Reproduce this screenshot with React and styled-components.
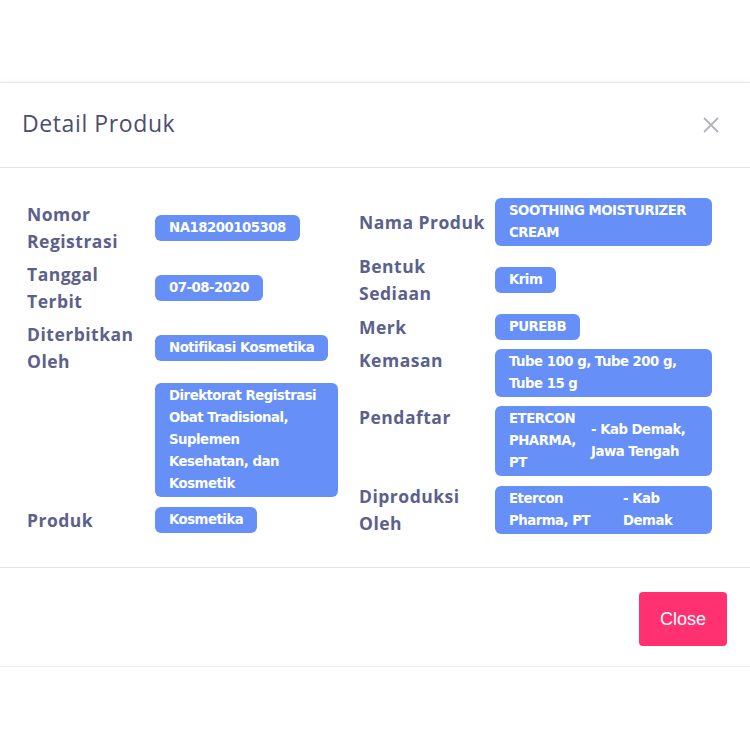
import React from "react";
import styled, { createGlobalStyle } from "styled-components";

const GlobalStyle = createGlobalStyle`
  body {
    margin: 0;
    background: #ffffff;
    font-family: "Open Sans", "Noto Sans", sans-serif;
  }
`;

const Page = styled.div`
  padding-top: 82px;
`;

const Modal = styled.div`
  background: #ffffff;
  border-top: 1px solid #e6e6ea;
  border-bottom: 1px solid #ececf0;
  box-shadow: 0 0 6px rgba(0, 0, 0, 0.05);
`;

const Header = styled.div`
  height: 84px;
  display: flex;
  align-items: center;
  justify-content: space-between;
  padding: 0 30px 0 22px;
  border-bottom: 1px solid #e6e6ea;
`;

const Title = styled.h2`
  margin: 0 0 4px;
  font-family: "Open Sans", sans-serif;
  font-size: 23px;
  font-weight: 500;
  color: #4b4e6c;
  letter-spacing: 0.6px;
`;

const CloseX = styled.button`
  border: 0;
  background: none;
  padding: 0;
  width: 18px;
  height: 18px;
  display: flex;
  cursor: pointer;
`;

const Body = styled.div`
  display: grid;
  grid-template-columns: 311px 353px;
  column-gap: 21px;
  padding: 28px 38px 30px 27px;
  border-bottom: 1px solid #e6e6ea;
`;

const Column = styled.div`
  display: flex;
  flex-direction: column;
  gap: ${(p) => p.$gap}px;
  padding-top: ${(p) => p.$pt || 0}px;
`;

const Row = styled.div`
  display: grid;
  grid-template-columns: ${(p) => p.$label}px 1fr;
  align-items: ${(p) => p.$align || "center"};
`;

const Label = styled.div`
  font-family: "Open Sans", sans-serif;
  font-size: 17.5px;
  font-weight: 700;
  line-height: 27px;
  letter-spacing: 0.5px;
  color: #5b618c;
`;

const Badge = styled.div`
  justify-self: ${(p) => (p.$full ? "stretch" : "start")};
  margin: 2px 0;
  padding: 2px 14px;
  background: #668ff8;
  border-radius: 6px;
  color: #ffffff;
  font-family: "DejaVu Sans", sans-serif;
  font-size: 13.3px;
  font-weight: 700;
  line-height: 22px;
  letter-spacing: -0.5px;
`;

const Split = styled.div`
  display: grid;
  grid-template-columns: ${(p) => p.$left}px 1fr;
  column-gap: ${(p) => p.$gap}px;
  align-items: center;
`;

const Footer = styled.div`
  display: flex;
  justify-content: flex-end;
  padding: 24px 23px 20px;
`;

const CloseButton = styled.button`
  width: 88px;
  height: 54px;
  border: 0;
  border-radius: 4px;
  background: #ff3170;
  color: #ffffff;
  font-family: "Liberation Sans", Arial, sans-serif;
  font-size: 18px;
  cursor: pointer;
`;

export default function App() {
  return (
    <Page>
      <GlobalStyle />
      <Modal>
        <Header>
          <Title>Detail Produk</Title>
          <CloseX aria-label="close">
            <svg width="18" height="18" viewBox="0 0 18 18">
              <path d="M2 2L16 16M16 2L2 16" stroke="#b4b4bd" strokeWidth="1.8" />
            </svg>
          </CloseX>
        </Header>
        <Body>
          <Column $gap={6} $pt={5}>
            <Row $label={128}>
              <Label>Nomor<br />Registrasi</Label>
              <Badge>NA18200105308</Badge>
            </Row>
            <Row $label={128}>
              <Label>Tanggal<br />Terbit</Label>
              <Badge>07-08-2020</Badge>
            </Row>
            <Row $label={128}>
              <Label>Diterbitkan<br />Oleh</Label>
              <Badge>Notifikasi Kosmetika</Badge>
            </Row>
            <Row $label={128}>
              <Label />
              <Badge $full>
                Direktorat Registrasi Obat Tradisional,<br />Suplemen<br />Kesehatan, dan Kosmetik
              </Badge>
            </Row>
            <Row $label={128}>
              <Label>Produk</Label>
              <Badge>Kosmetika</Badge>
            </Row>
          </Column>
          <Column $gap={5}>
            <Row $label={136}>
              <Label>Nama Produk</Label>
              <Badge $full>SOOTHING MOISTURIZER CREAM</Badge>
            </Row>
            <Row $label={136}>
              <Label>Bentuk<br />Sediaan</Label>
              <Badge>Krim</Badge>
            </Row>
            <Row $label={136}>
              <Label>Merk</Label>
              <Badge>PUREBB</Badge>
            </Row>
            <Row $label={136} $align="start">
              <Label>Kemasan</Label>
              <Badge $full>Tube 100 g, Tube 200 g, Tube 15 g</Badge>
            </Row>
            <Row $label={136} $align="start">
              <Label>Pendaftar</Label>
              <Badge $full>
                <Split $left={76} $gap={6}>
                  <span>ETERCON PHARMA, PT</span>
                  <span>- Kab Demak, Jawa Tengah</span>
                </Split>
              </Badge>
            </Row>
            <Row $label={136}>
              <Label>Diproduksi<br />Oleh</Label>
              <Badge $full>
                <Split $left={100} $gap={14}>
                  <span>Etercon Pharma, PT</span>
                  <span>- Kab Demak</span>
                </Split>
              </Badge>
            </Row>
          </Column>
        </Body>
        <Footer>
          <CloseButton>Close</CloseButton>
        </Footer>
      </Modal>
    </Page>
  );
}
